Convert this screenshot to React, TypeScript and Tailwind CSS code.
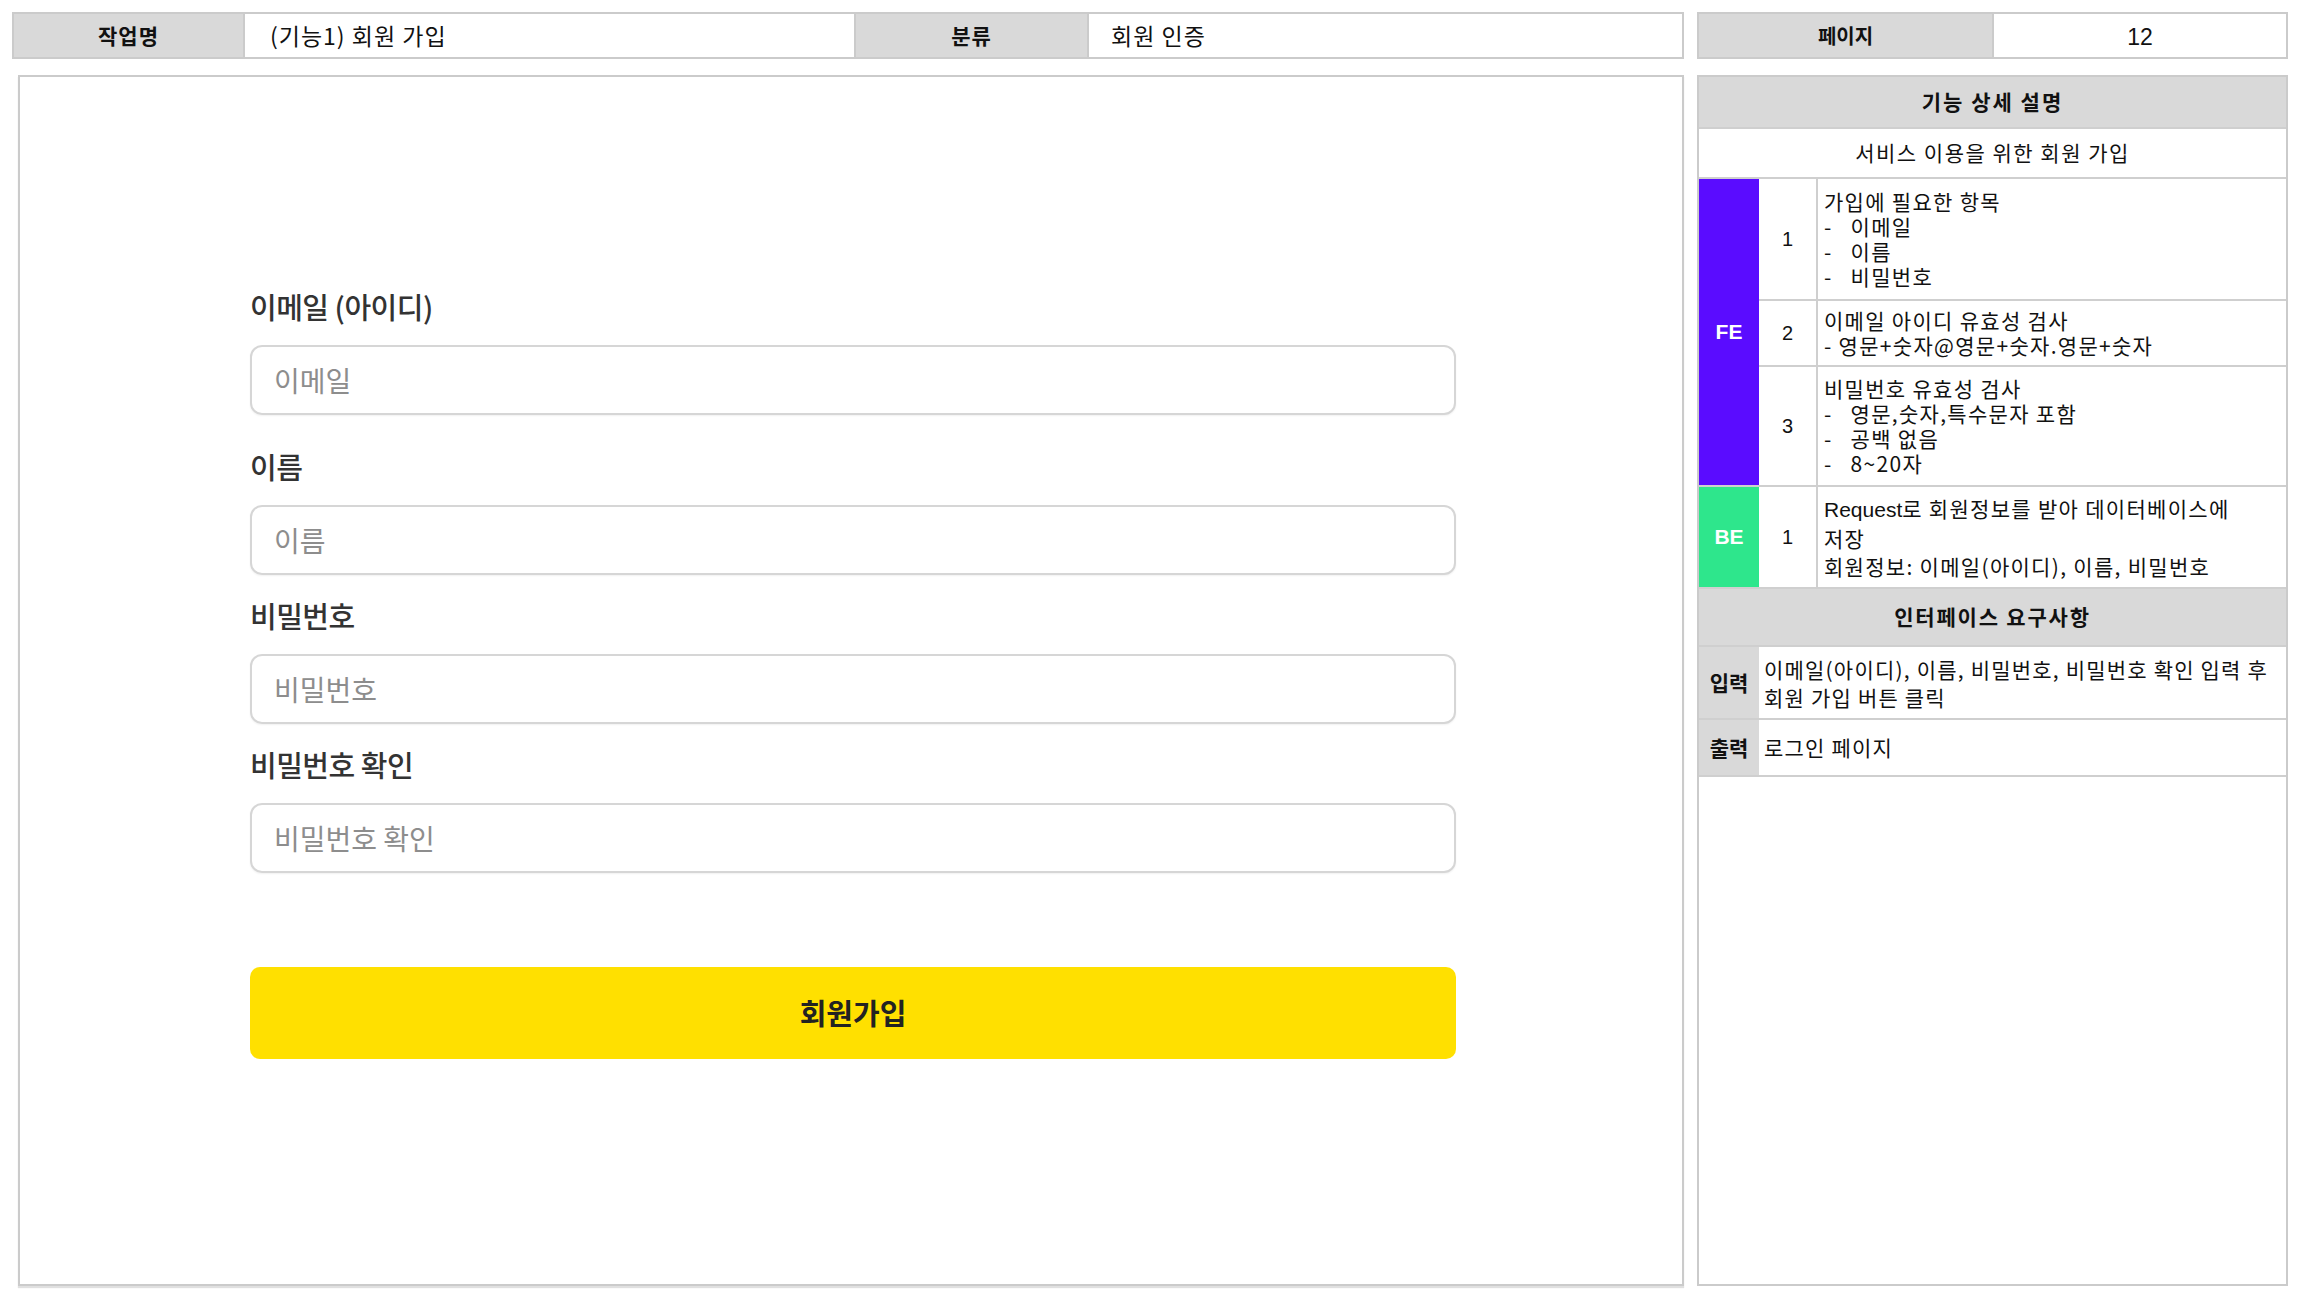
import React from "react";

const font = { fontFamily: '"Noto Sans CJK KR", "Noto Sans", sans-serif' };
const arial = { fontFamily: '"Liberation Sans", "Noto Sans CJK KR", sans-serif' };

function Field({ label, placeholder, gapTop }: { label: string; placeholder: string; gapTop: string }) {
  return (
    <div className={`flex flex-col ${gapTop}`}>
      <div className="text-[29px] leading-[40px] font-medium text-[#333] tracking-[-0.5px]">{label}</div>
      <input
        readOnly
        placeholder={placeholder}
        className="mt-[19px] h-[70px] w-full rounded-[12px] border-2 border-[#d6d6d6] bg-white pl-[22px] text-[28px] text-[#333] outline-none placeholder:text-[#8d8d8d] shadow-[0_1px_2px_rgba(0,0,0,0.06)]"
        style={font}
      />
    </div>
  );
}

function NumRow({ num, h, children, leading = "leading-[25px]" }: { num: string; h: string; children: React.ReactNode; leading?: string }) {
  return (
    <div className={`flex ${h} border-b-2 border-[#cfcfcf]`}>
      <div className="w-[59px] flex items-center justify-center border-r-2 border-[#cfcfcf] text-[20px] text-[#111]" style={arial}>
        {num}
      </div>
      <div className={`flex-1 flex flex-col justify-center pl-[6px] text-[21px] tracking-[1.3px] ${leading} text-[#111] whitespace-pre`}>
        {children}
      </div>
    </div>
  );
}

export default function App() {
  return (
    <div className="w-[2310px] h-[1300px] bg-white flex gap-[13px] pl-[12px] pt-[12px]" style={font}>
      {/* Left column */}
      <div className="w-[1672px] flex flex-col">
        <div className="flex h-[47px] border-2 border-[#cbcbcb]">
          <div className="w-[231px] bg-[#d9d9d9] flex items-center justify-center text-[21px] tracking-[1px] font-bold text-[#111] border-r-2 border-[#cbcbcb]">
            작업명
          </div>
          <div className="w-[611px] flex items-center pl-[25px] text-[23px] tracking-[1px] text-[#111] border-r-2 border-[#cbcbcb]">
            (기능1) 회원 가입
          </div>
          <div className="w-[233px] bg-[#d9d9d9] flex items-center justify-center text-[21px] tracking-[1px] font-bold text-[#111] border-r-2 border-[#cbcbcb]">
            분류
          </div>
          <div className="flex-1 flex items-center pl-[22px] text-[23px] tracking-[1px] text-[#111]">회원 인증</div>
        </div>

        <div className="mt-[16px] ml-[6px] h-[1211px] border-2 border-[#cbcbcb] shadow-[0_2px_1px_rgba(0,0,0,0.12)] bg-white">
          <div className="pl-[230px] pt-[209px] w-[1436px] flex flex-col">
            <Field label="이메일 (아이디)" placeholder="이메일" gapTop="" />
            <Field label="이름" placeholder="이름" gapTop="mt-[31px]" />
            <Field label="비밀번호" placeholder="비밀번호" gapTop="mt-[20px]" />
            <Field label="비밀번호 확인" placeholder="비밀번호 확인" gapTop="mt-[20px]" />
            <button className="mt-[94px] h-[92px] w-full rounded-[10px] bg-[#ffe000] text-[29px] font-semibold text-[#222] flex items-center justify-center">
              회원가입
            </button>
          </div>
        </div>
      </div>

      {/* Right column */}
      <div className="w-[591px] flex flex-col">
        <div className="flex h-[47px] border-2 border-[#cbcbcb]">
          <div className="w-[295px] bg-[#d9d9d9] flex items-center justify-center text-[20px] font-bold text-[#111] border-r-2 border-[#cbcbcb]">
            페이지
          </div>
          <div className="flex-1 flex items-center justify-center pt-[4px] text-[23px] text-[#111]" style={arial}>
            12
          </div>
        </div>

        <div className="mt-[16px] h-[1211px] border-2 border-[#cbcbcb] bg-white flex flex-col">
          <div className="h-[52px] bg-[#d9d9d9] flex items-center justify-center text-[21px] tracking-[2px] font-bold text-[#111] border-b-2 border-[#cfcfcf]">
            기능 상세 설명
          </div>
          <div className="h-[50px] flex items-center justify-center text-[21px] tracking-[1.5px] text-[#111] border-b-2 border-[#cfcfcf]">
            서비스 이용을 위한 회원 가입
          </div>

          {/* FE */}
          <div className="flex">
            <div className="w-[60px] bg-[#5a0cff] flex items-center justify-center text-white font-bold text-[21px] border-b-2 border-[#cfcfcf]" style={arial}>
              FE
            </div>
            <div className="flex-1 flex flex-col">
              <NumRow num="1" h="h-[122px]">
                <div>가입에 필요한 항목</div>
                <div>{"-   이메일"}</div>
                <div>{"-   이름"}</div>
                <div>{"-   비밀번호"}</div>
              </NumRow>
              <NumRow num="2" h="h-[66px]">
                <div>이메일 아이디 유효성 검사</div>
                <div>- 영문+숫자@영문+숫자.영문+숫자</div>
              </NumRow>
              <NumRow num="3" h="h-[120px]">
                <div>비밀번호 유효성 검사</div>
                <div>{"-   영문,숫자,특수문자 포함"}</div>
                <div>{"-   공백 없음"}</div>
                <div>{"-   8~20자"}</div>
              </NumRow>
            </div>
          </div>

          {/* BE */}
          <div className="flex">
            <div className="w-[60px] bg-[#2ee68c] flex items-center justify-center text-white font-bold text-[21px] border-b-2 border-[#cfcfcf]" style={arial}>
              BE
            </div>
            <div className="flex-1 flex flex-col">
              <NumRow num="1" h="h-[102px]" leading="leading-[28px]">
                <div><span style={arial} className="tracking-[0px]">Request</span>로 회원정보를 받아 데이터베이스에</div>
                <div>저장</div>
                <div>회원정보: 이메일(아이디), 이름, 비밀번호</div>
              </NumRow>
            </div>
          </div>

          <div className="h-[58px] bg-[#d9d9d9] flex items-center justify-center text-[21px] tracking-[1.8px] font-bold text-[#111] border-b-2 border-[#cfcfcf]">
            인터페이스 요구사항
          </div>
          <div className="flex h-[73px] border-b-2 border-[#cfcfcf]">
            <div className="w-[60px] bg-[#d9d9d9] flex items-center justify-center text-[21px] font-bold text-[#111]">입력</div>
            <div className="flex-1 flex flex-col justify-center pl-[5px] text-[21px] tracking-[1.2px] leading-[28px] text-[#111]">
              <div>이메일(아이디), 이름, 비밀번호, 비밀번호 확인 입력 후</div>
              <div>회원 가입 버튼 클릭</div>
            </div>
          </div>
          <div className="flex h-[57px] border-b-2 border-[#cfcfcf]">
            <div className="w-[60px] bg-[#d9d9d9] flex items-center justify-center text-[21px] font-bold text-[#111]">출력</div>
            <div className="flex-1 flex items-center pl-[5px] text-[21px] tracking-[1.2px] text-[#111]">로그인 페이지</div>
          </div>
        </div>
      </div>
    </div>
  );
}
